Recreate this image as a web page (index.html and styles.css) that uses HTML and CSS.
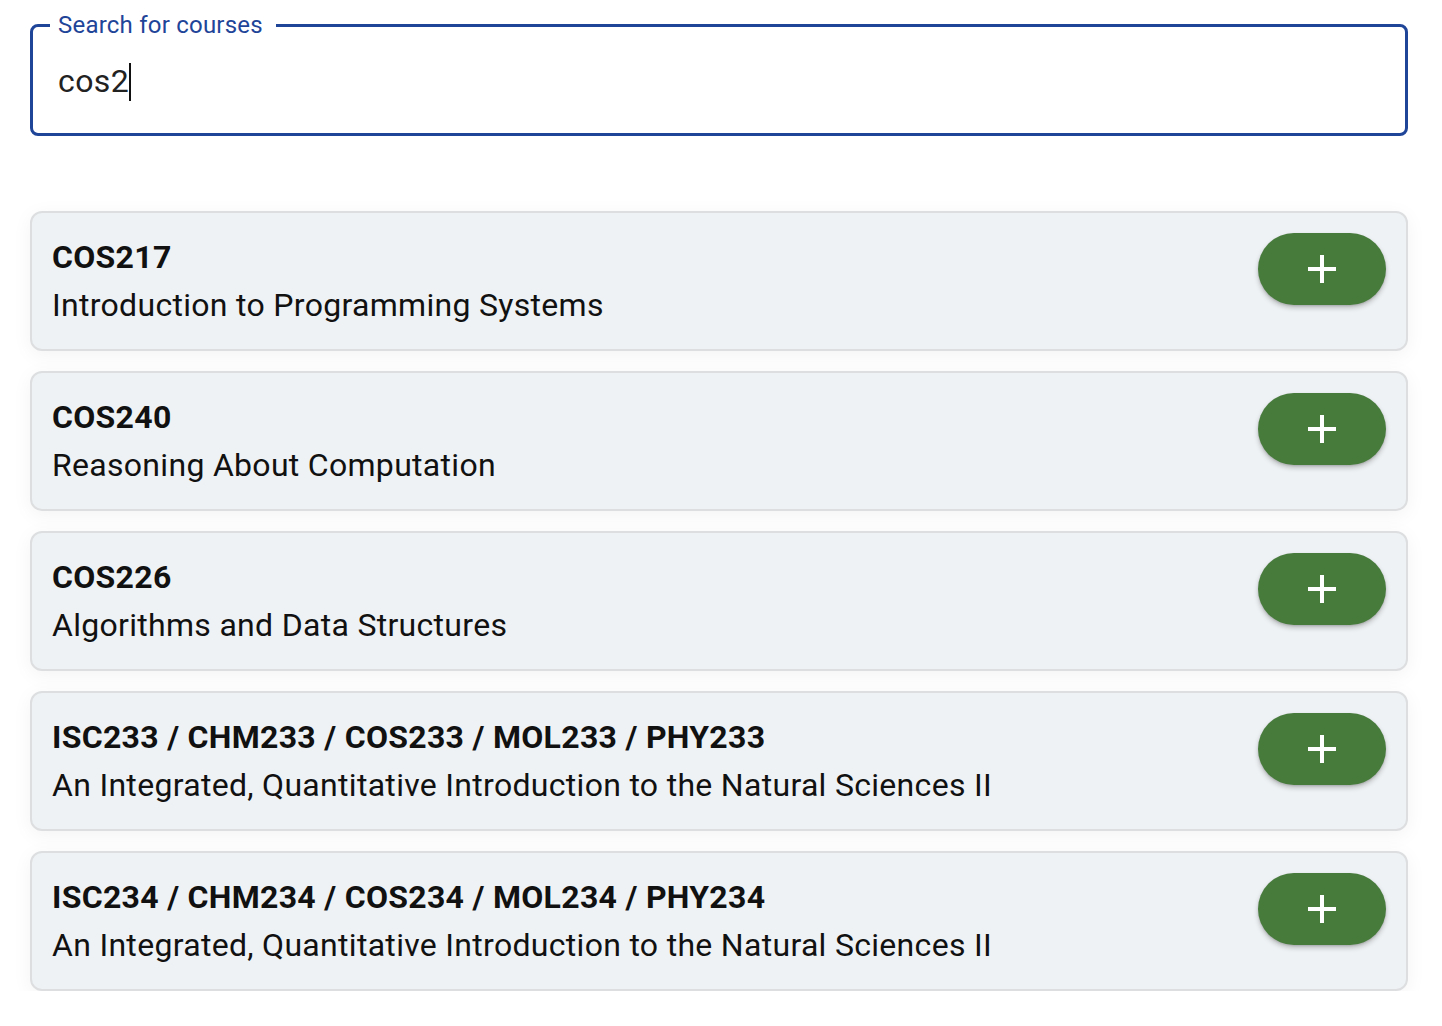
FILE: index.html
```html
<!DOCTYPE html>
<html lang="en">
<head>
<meta charset="utf-8">
<title>Course search</title>
<link rel="stylesheet" href="styles.css">
</head>
<body>
<main class="page">
  <div class="field">
    <span class="field-label">Search for courses</span>
    <div class="field-input">cos2<span class="caret"></span></div>
  </div>

  <ul class="results">
    <li class="card">
      <div class="card-text">
        <div class="code">COS217</div>
        <div class="title">Introduction to Programming Systems</div>
      </div>
      <button class="add" aria-label="Add course"><svg viewBox="0 0 28 28" width="28" height="28"><path d="M14 0v28M0 14h28" stroke="#fff" stroke-width="4"/></svg></button>
    </li>
    <li class="card">
      <div class="card-text">
        <div class="code">COS240</div>
        <div class="title">Reasoning About Computation</div>
      </div>
      <button class="add" aria-label="Add course"><svg viewBox="0 0 28 28" width="28" height="28"><path d="M14 0v28M0 14h28" stroke="#fff" stroke-width="4"/></svg></button>
    </li>
    <li class="card">
      <div class="card-text">
        <div class="code">COS226</div>
        <div class="title">Algorithms and Data Structures</div>
      </div>
      <button class="add" aria-label="Add course"><svg viewBox="0 0 28 28" width="28" height="28"><path d="M14 0v28M0 14h28" stroke="#fff" stroke-width="4"/></svg></button>
    </li>
    <li class="card">
      <div class="card-text">
        <div class="code">ISC233 / CHM233 / COS233 / MOL233 / PHY233</div>
        <div class="title">An Integrated, Quantitative Introduction to the Natural Sciences II</div>
      </div>
      <button class="add" aria-label="Add course"><svg viewBox="0 0 28 28" width="28" height="28"><path d="M14 0v28M0 14h28" stroke="#fff" stroke-width="4"/></svg></button>
    </li>
    <li class="card">
      <div class="card-text">
        <div class="code">ISC234 / CHM234 / COS234 / MOL234 / PHY234</div>
        <div class="title">An Integrated, Quantitative Introduction to the Natural Sciences II</div>
      </div>
      <button class="add" aria-label="Add course"><svg viewBox="0 0 28 28" width="28" height="28"><path d="M14 0v28M0 14h28" stroke="#fff" stroke-width="4"/></svg></button>
    </li>
  </ul>
</main>
</body>
</html>
```

FILE: styles.css
```css
* { box-sizing: border-box; }
html, body { margin: 0; background: #fff; }
body {
  font-family: Roboto, "Liberation Sans", sans-serif;
  color: #111;
}
.page {
  padding: 24px 34px 0 30px;
}
.field {
  position: relative;
  height: 112px;
  border: 3px solid #1f4599;
  border-radius: 8px;
}
.field-label {
  position: absolute;
  top: -14px;
  left: 17px;
  padding: 0 13px 0 8px;
  background: #fff;
  color: #1f4599;
  font-size: 24px;
  line-height: 24px;
  letter-spacing: 0.22px;
}
.field-input {
  padding: 30px 25px 0;
  font-size: 32px;
  line-height: 48px;
  color: #222;
  letter-spacing: 0.4px;
}
.caret {
  display: inline-block;
  width: 2px;
  height: 38px;
  background: #111;
  vertical-align: -9px;
}
.results {
  list-style: none;
  margin: 75px 0 0;
  padding: 0;
  display: flex;
  flex-direction: column;
  gap: 20px;
}
.card {
  display: flex;
  align-items: flex-start;
  justify-content: space-between;
  padding: 20px;
  background: #eff2f4;
  border: 2px solid #dcdee0;
  border-radius: 12px;
  box-shadow: 0 4px 20px rgba(0, 0, 0, 0.05);
}
.card-text {
  font-size: 32px;
  line-height: 48px;
  letter-spacing: 0.3px;
}
.code {
  font-weight: 700;
}
.add {
  flex: none;
  width: 128px;
  height: 72px;
  border: none;
  border-radius: 36px;
  background: #467b3b;
  box-shadow: 0 3px 5px rgba(0, 0, 0, 0.22), 0 1px 2px rgba(0, 0, 0, 0.12);
  display: flex;
  align-items: center;
  justify-content: center;
  padding: 0;
}
```
